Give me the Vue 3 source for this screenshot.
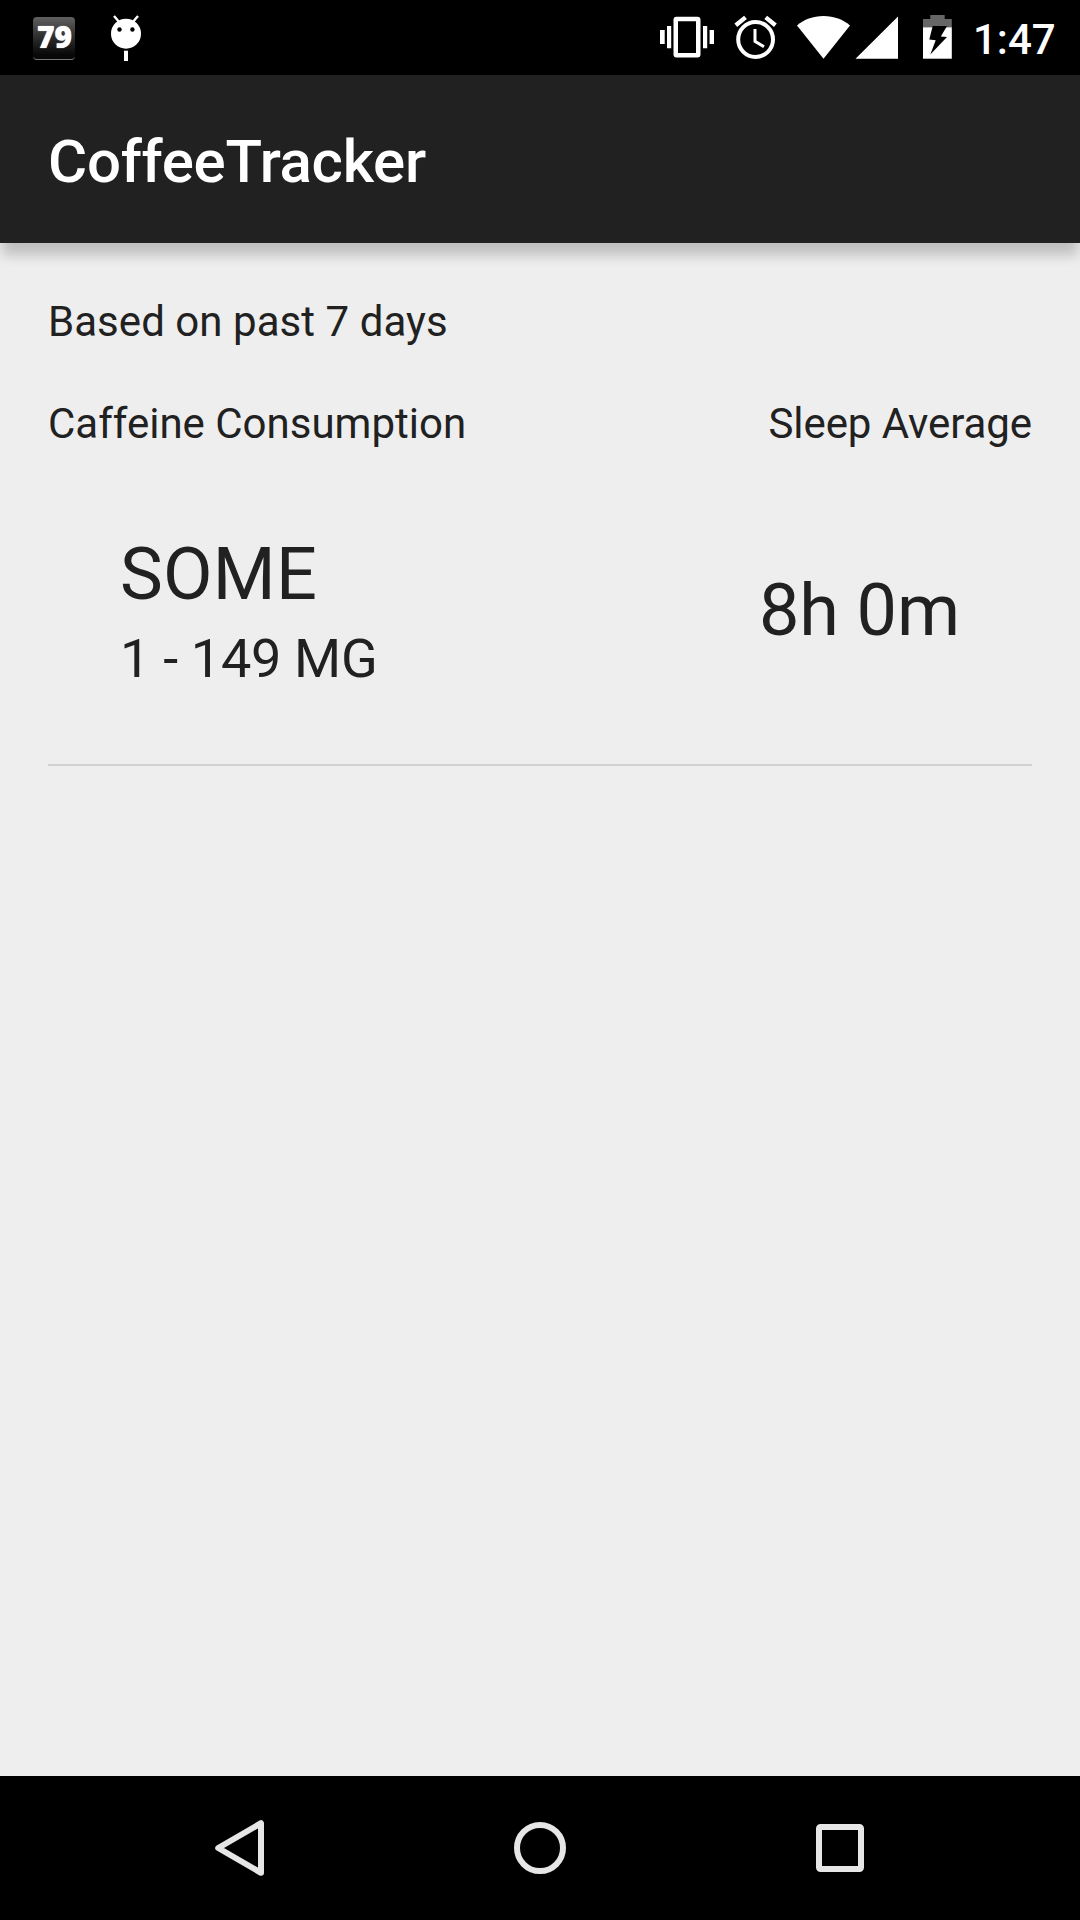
<script setup>
const title = 'CoffeeTracker'
const summary = {
  period: 'Based on past 7 days',
  level: 'SOME',
  range: '1 - 149 MG',
  sleep: '8h 0m',
}
</script>

<template>
  <div class="screen">
    <header class="status-bar">
      <div class="notifications">
        <span class="badge">79</span>
        <svg class="android" width="32" height="48" viewBox="110 15 32 48">
          <path d="M114 16l6 7M138 16l-6 7" stroke="#fff" stroke-width="2.4" />
          <circle cx="126" cy="33.7" r="15" fill="#fff" />
          <circle cx="119.5" cy="29.5" r="2.2" />
          <circle cx="132.4" cy="29.5" r="2.2" />
          <path d="M124 50.7h4V61h-4z" fill="#fff" />
        </svg>
      </div>
      <div class="system">
        <svg width="56" height="48" viewBox="659 14 56 48" fill="#fff">
          <path d="M660 30h4.7v14H660zM667 26h4.2v22.3H667zM703 26h4.2v22.3H703zM709.6 30h4.4v14h-4.4z" />
          <path fill-rule="evenodd" d="M676.5 16.7h21a3 3 0 0 1 3 3V54.5a3 3 0 0 1-3 3h-21a3 3 0 0 1-3-3V19.7a3 3 0 0 1 3-3zM678 21.3V53h18V21.3z" />
        </svg>
        <svg class="alarm" width="44" height="48" viewBox="734 14 44 48" fill="none" stroke="#fff">
          <circle cx="755.6" cy="39.5" r="17.4" stroke-width="4" />
          <path d="M755 29v12.3l9 5.4" stroke-width="3" />
          <path d="M735.8 25.2l9.7-7.8M765.7 17.4l9.7 7.8" stroke-width="4.4" />
        </svg>
        <svg class="wifi" width="54" height="48" viewBox="797 14 54 48" fill="#fff">
          <path d="M823.5 58.7L797 25.5C804 19.5 813 16 823.5 16S843 19.5 850 25.5z" />
        </svg>
        <svg class="signal" width="44" height="48" viewBox="855 14 44 48" fill="#fff">
          <path d="M855.5 58.7H898V16.5z" />
        </svg>
        <svg class="battery" width="30" height="48" viewBox="923 14 30 48">
          <path d="M923 27.5V19h7.3v-4h14.4v4h7.1v8.5z" fill="#666" />
          <path d="M923 27.3h28.8v31.4H923z" fill="#fff" />
          <path d="M932.7 26H947l-6.2 10.5 6.2.6-16.7 17.4 5.4-14.2-6.4-.8z" />
        </svg>
        <span class="clock">1:47</span>
      </div>
    </header>

    <div class="app-bar"><h1>{{ title }}</h1></div>

    <main>
      <p>{{ summary.period }}</p>
      <div class="row labels">
        <span>Caffeine Consumption</span>
        <span class="sleep-label">Sleep Average</span>
      </div>
      <div class="row values">
        <div>
          <div class="big level">{{ summary.level }}</div>
          <div class="range">{{ summary.range }}</div>
        </div>
        <div class="big sleep">{{ summary.sleep }}</div>
      </div>
    </main>

    <nav>
      <svg width="60" height="60" viewBox="210 1818 60 60">
        <path d="M218.2 1848L261 1823.2V1872.8z" />
      </svg>
      <svg width="60" height="60" viewBox="510 1818 60 60">
        <circle cx="540" cy="1848" r="23" />
      </svg>
      <svg width="60" height="60" viewBox="810 1818 60 60">
        <rect x="819" y="1827" width="42" height="42" rx="1.5" />
      </svg>
    </nav>
  </div>
</template>

<style>
body {
  margin: 0;
  background: #eee;
}
</style>

<style scoped>
.screen {
  width: 1080px;
  height: 1920px;
  display: flex;
  flex-direction: column;
  background: #eee;
  color: #212121;
  font-family: Roboto, sans-serif;
  overflow: hidden;
}
svg {
  display: block;
  flex: none;
}
.status-bar {
  height: 75px;
  flex: none;
  box-sizing: border-box;
  padding: 0 25px 0 33px;
  display: flex;
  justify-content: space-between;
  background: #000;
  color: #fff;
}
.notifications,
.system {
  display: flex;
  align-items: flex-start;
  padding-top: 14px;
}
.badge {
  box-sizing: border-box;
  width: 42px;
  height: 43px;
  margin-top: 3px;
  padding-left: 1px;
  border-radius: 4px;
  border-bottom: 1px solid #777;
  background: linear-gradient(#606060, #303030 45%, #080808 90%);
  font: 800 30px/40px "Open Sans", sans-serif;
  text-align: center;
  text-shadow: 0 0 1px #fff;
}
.android {
  margin: 1px 0 0 35px;
}
.alarm {
  margin-left: 19px;
}
.wifi {
  margin-left: 19px;
}
.signal {
  margin-left: 4px;
}
.battery {
  margin-left: 24px;
}
.clock {
  margin: 1px 0 0 20px;
  width: 82px;
  font-size: 42px;
  line-height: 49px;
  font-weight: 500;
  white-space: nowrap;
}
.app-bar {
  height: 168px;
  flex: none;
  box-sizing: border-box;
  padding: 52px 48px 0;
  background: #212121;
  box-shadow: 0 14px 12px -2px rgba(0, 0, 0, 0.2);
}
h1 {
  margin: 0;
  color: #fff;
  font-size: 60px;
  line-height: 70px;
  font-weight: 500;
  letter-spacing: -0.28px;
}
main {
  flex: 1;
  padding: 54px 48px 0;
  font-size: 42px;
  line-height: 49px;
}
p {
  margin: 0 0 53px;
  letter-spacing: 0.05px;
}
.row {
  display: flex;
  justify-content: space-between;
}
.sleep-label {
  letter-spacing: -0.08px;
}
.values {
  align-items: center;
  padding: 85px 72px 74px;
  border-bottom: 2px solid #d0d0d0;
}
.big {
  font-size: 72px;
  line-height: 84px;
}
.level {
  letter-spacing: 0.25px;
}
.sleep {
  margin-bottom: 2px;
  letter-spacing: -0.1px;
}
.range {
  margin-top: 10px;
  font-size: 54px;
  line-height: 63px;
  letter-spacing: -0.3px;
}
nav {
  height: 144px;
  flex: none;
  display: flex;
  align-items: center;
  justify-content: space-between;
  padding: 0 210px;
  background: #000;
}
nav svg {
  fill: none;
  stroke: #e6e6e6;
  stroke-width: 6;
  stroke-linejoin: round;
}
</style>
